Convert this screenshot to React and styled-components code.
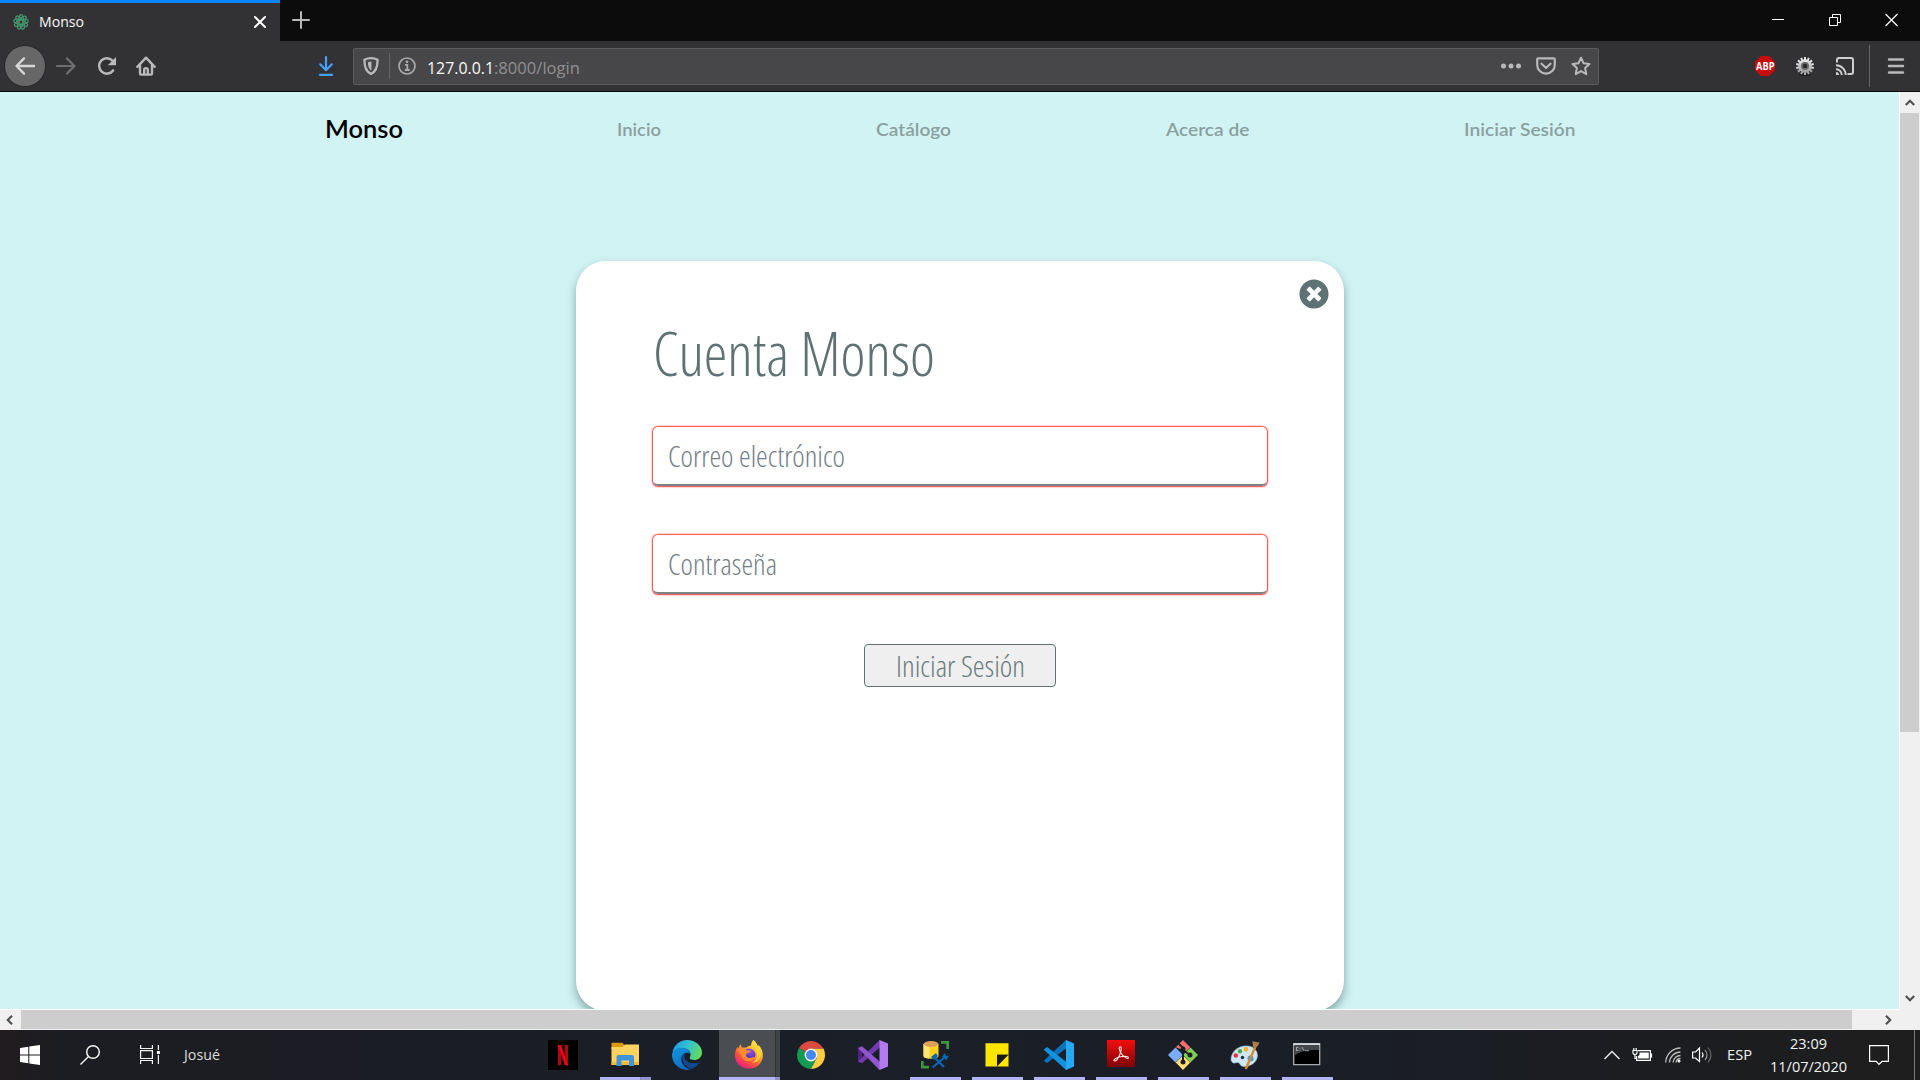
import React, { useLayoutEffect, useRef, useState } from "react";
import styled, { createGlobalStyle } from "styled-components";
import { FaTimesCircle } from "react-icons/fa";

const GlobalStyle = createGlobalStyle`
  * { box-sizing: border-box; }
  html, body { margin: 0; padding: 0; overflow: hidden; }
  body { font-family: "Open Sans", "Noto Sans", sans-serif; }
  svg { display: block; flex: none; overflow: visible; }
`;

const Screen = styled.div`
  width: 1920px;
  height: 1080px;
  display: flex;
  flex-direction: column;
  overflow: hidden;
`;

/* ---------- text that keeps a fixed advance width ---------- */

const FitBox = styled.span`
  display: block;
  flex: none;
  width: ${(p) => p.$w}px;
  white-space: nowrap;
`;
const FitInner = styled.span`
  display: inline-block;
  transform-origin: 0 50%;
`;

function Fit({ w, children }) {
  const ref = useRef(null);
  const [scale, setScale] = useState(1);
  useLayoutEffect(() => {
    setScale(w / ref.current.getBoundingClientRect().width);
  }, []);
  return (
    <FitBox $w={w}>
      <FitInner ref={ref} style={{ transform: `scaleX(${scale})` }}>{children}</FitInner>
    </FitBox>
  );
}

/* ---------- browser chrome ---------- */

const TabBar = styled.div`
  height: 41px;
  flex: none;
  display: flex;
  background: #0c0c0d;
`;
const Tab = styled.div`
  width: 280px;
  height: 41px;
  display: flex;
  align-items: center;
  padding: 0 14px 0 13px;
  background: #323234;
  border-top: 3px solid #0a84ff;
`;
const TabTitle = styled.div`
  flex: 1;
  margin-left: 10px;
  font-size: 14.5px;
  line-height: 20px;
  color: #f9f9fa;
`;
const NewTab = styled.div`
  display: flex;
  align-items: center;
  padding: 0 0 1px 12px;
`;
const WindowControls = styled.div`
  margin-left: auto;
  display: flex;
  align-items: center;
  gap: 44px;
  padding: 0 22px 1px 0;
`;
const Toolbar = styled.div`
  height: 51px;
  flex: none;
  display: flex;
  align-items: center;
  padding: 0 15px 0 5px;
  background: #323234;
  border-bottom: 1px solid #0c0c0d;
`;
const BackButton = styled.div`
  width: 40px;
  height: 40px;
  display: grid;
  place-items: center;
  border-radius: 50%;
  background: #676768;
  box-shadow: 0 0 0 1px #29292b;
`;
const Slot = styled.div`
  flex: none;
  margin-left: ${(p) => p.$ml || 0}px;
`;
const UrlBar = styled.div`
  width: 1246px;
  height: 37px;
  flex: none;
  margin-left: 19px;
  display: flex;
  align-items: center;
  padding: 0 7px 0 8px;
  background: #474749;
  border: 1px solid #5c5c5e;
  border-radius: 2px;
`;
const Rule = styled.div`
  width: 1px;
  height: ${(p) => p.$h}px;
  flex: none;
  margin-left: ${(p) => p.$ml}px;
  background: #656567;
`;
const Address = styled.div`
  display: flex;
  margin: 4px auto 0 11px;
  font-size: 16.5px;
  line-height: 22px;
  color: #909092;
`;
const Host = styled.span`
  color: #fafafa;
`;
const AbpBadge = styled.div`
  width: 20px;
  height: 20px;
  display: grid;
  place-items: center;
  background: #c70d0c;
  clip-path: polygon(30% 0, 70% 0, 100% 30%, 100% 70%, 70% 100%, 30% 100%, 0 70%, 0 30%);
  color: #fff;
  font-size: 11px;
  font-weight: 700;
  line-height: 20px;
`;

/* ---------- page ---------- */

const Viewport = styled.div`
  height: 938px;
  flex: none;
  display: grid;
  grid-template-columns: 1899px 21px;
  grid-template-rows: 917px 21px;
`;
const Page = styled.div`
  background: #d1f3f3;
  overflow: hidden;
`;
const Nav = styled.nav`
  height: 74px;
  display: flex;
  align-items: center;
  justify-content: space-between;
  padding: 0 323.5px 0 324.5px;
  font-family: Lato, "Open Sans", sans-serif;
  font-size: 17.8px;
  font-weight: 600;
  line-height: 24px;
  color: #8aa09f;
`;
const Brand = styled.div`
  font-size: 24px;
  line-height: 32px;
  color: #000;
`;
const Card = styled.main`
  width: 768px;
  height: 750px;
  margin: 95px 0 0 576px;
  padding: 17.5px 15px 0 76.5px;
  background: #fff;
  border-radius: 30px;
  box-shadow: 0 5px 10px rgba(60, 90, 90, 0.5);
  font-weight: 300;
  font-stretch: 75%;
  color: #5f7273;
`;
const CloseRow = styled.div`
  height: 33.5px;
  display: flex;
  justify-content: flex-end;
`;
const Title = styled.h1`
  margin: 0 0 33px;
  font-size: 60px;
  font-weight: 300;
  line-height: 82px;
`;
const Field = styled.div`
  width: 614px;
  height: 59px;
  margin-bottom: 49.3px;
  padding: 0 15px;
  border-bottom: 2px solid #798484;
  border-radius: 5px;
  box-shadow: 0 0 1.5px 1px rgba(255, 0, 0, 0.8);
  font-size: 30px;
  line-height: 57px;
  color: #757f88;
`;
const Submit = styled.button`
  width: 192px;
  height: 43px;
  margin: 0 0 0 211.5px;
  padding: 0;
  display: flex;
  align-items: center;
  justify-content: center;
  background: #efefef;
  border: 1px solid #5f7273;
  border-radius: 4px;
  font: inherit;
  font-size: 30px;
  line-height: 41px;
  color: #697c7d;
`;

/* ---------- scrollbars ---------- */

const VScroll = styled.div`
  display: flex;
  flex-direction: column;
  align-items: center;
  background: #f0f0f0;
  border-left: 1px solid #fff;
`;
const HScroll = styled.div`
  display: flex;
  align-items: center;
  background: #f0f0f0;
  border-top: 1px solid #fff;
`;
const ArrowCell = styled.div`
  width: 21px;
  height: 21px;
  flex: none;
  display: grid;
  place-items: center;
  padding: ${(p) => p.$pad || 0};
`;
const VThumb = styled.div`
  width: 19px;
  height: 619px;
  margin: 0 1px auto 0;
  background: #cdcdcd;
`;
const HThumb = styled.div`
  width: 1831px;
  height: 19px;
  margin: 0 auto 1px 0;
  background: #cdcdcd;
`;
const Corner = styled.div`
  background: #f0f0f0;
`;

/* ---------- taskbar ---------- */

const Taskbar = styled.footer`
  height: 50px;
  flex: none;
  display: flex;
  align-items: center;
  background: linear-gradient(90deg, #211c1f 0, #1c1d22 60px, #1b1d24 450px, #1a1f28 900px, #1a1e26 1300px, #1c1d20 1700px, #1e1e1e 1920px);
  color: #f2f2f2;
  font-size: 14.3px;
  line-height: 20px;
`;
const StartArea = styled.div`
  width: 532px;
  flex: none;
  display: flex;
  align-items: center;
  padding-left: 20px;
`;
const UserName = styled.div`
  margin-left: 24px;
  color: #dcdcdc;
`;
const Apps = styled.div`
  display: flex;
  height: 50px;
`;
const AppCell = styled.div`
  width: 62px;
  height: 50px;
  display: flex;
  flex-direction: column;
  align-items: center;
  padding-top: 10px;
  background: ${(p) =>
    p.$active
      ? "linear-gradient(90deg, transparent 1px, #4a4d52 1px, #4a4d52 57px, #303338 57px, #303338 58px, #404348 58px)"
      : "none"};
`;
const Underline = styled.div`
  width: ${(p) => (p.$active ? 62 : 51)}px;
  height: 3px;
  margin-top: 7px;
  background: ${(p) =>
    p.$active
      ? "linear-gradient(90deg, transparent 1px, #b3b4f5 1px, #b3b4f5 57px, #8e8fc5 57px)"
      : p.$group
      ? "linear-gradient(90deg, #b3b4f5 40px, #7f80a5 40px, #9495cd 41px)"
      : "#b3b4f5"};
`;
const Tray = styled.div`
  margin-left: auto;
  height: 50px;
  display: flex;
  align-items: center;
`;
const Clock = styled.div`
  display: flex;
  flex-direction: column;
  align-items: center;
  gap: 3px;
  margin: 1px 0 0 18px;
`;
const ShowDesktop = styled.div`
  width: 6px;
  height: 50px;
  margin-left: 25px;
  border-left: 1px solid #777;
`;

/* ---------- icons ---------- */

const Icon = ({ w = 20, h = w, box, color = "#b9b9ba", sw = 2, children }) => (
  <svg width={w} height={h} viewBox={box || `0 0 ${w} ${h}`} fill="none" stroke={color} strokeWidth={sw}>
    {children}
  </svg>
);

const Favicon = () => (
  <Icon w={16} color="#45936d" sw={1.3}>
    {[0, 40, 80, 120, 160, 200, 240, 280, 320].map((a) => (
      <g key={a} transform={`rotate(${a} 8 8)`}>
        <circle cx="8" cy="2.3" r="1.6" />
        <path d="M8 4.2L6.6 6M8 4.2L9.5 6" />
      </g>
    ))}
    <circle cx="8" cy="8" r="2.2" />
  </Icon>
);

const ArrowLeft = ({ color }) => (
  <Icon color={color} sw={2.4}>
    <path d="M19 10H2M9 2.4L1.5 10L9 17.6" strokeLinecap="round" strokeLinejoin="round" />
  </Icon>
);
const ArrowRight = ({ color }) => (
  <Icon color={color} sw={2.2}>
    <path d="M1 10H18M11 2.4L18.5 10L11 17.6" strokeLinecap="round" strokeLinejoin="round" />
  </Icon>
);
const Reload = () => (
  <Icon w={20} sw={2.5}>
    <path d="M16.1 14.4A7.7 7.7 0 1 1 15.4 4.6" strokeLinecap="round" />
    <path d="M19 1v8.2h-8.2z" fill="#b9b9ba" stroke="none" />
  </Icon>
);
const Home = () => (
  <Icon sw={2.4}>
    <path d="M1.3 10.8L10 1.7l8.7 9.1M4 9v8.4q0 1.2 1.2 1.2h9.6q1.2 0 1.2-1.2V9" strokeLinecap="round" strokeLinejoin="round" />
    <path d="M8.2 18v-4.6q0-1.3 1.8-1.3t1.8 1.3V18" />
  </Icon>
);
const Download = () => (
  <Icon w={16} h={20} color="#45a1ff" sw={2.2}>
    <path d="M8 1v13M2.2 8.3L8 14.2l5.8-5.9M2 18.8h12" strokeLinecap="round" strokeLinejoin="round" />
  </Icon>
);
const Shield = () => (
  <Icon w={16} h={18}>
    <path d="M8 1.2c2.5 0 4.6.6 6.6 1.6 0 6.4-.8 11.8-6.6 14C2.2 14.6 1.4 9.2 1.4 2.8 3.4 1.8 5.5 1.2 8 1.2z" strokeWidth="2.3" strokeLinejoin="round" />
    <path d="M8.4 4.6v9c-2.6-1.5-3.4-4.4-3.5-8.3 1.1-.5 2.2-.7 3.5-.7z" fill="#b9b9ba" stroke="none" />
  </Icon>
);
const Info = () => (
  <Icon w={18} color="#a9a9aa" sw={1.7}>
    <circle cx="9" cy="9" r="8" />
    <path d="M7 7.8h2.3v5M6.8 13h5" strokeWidth="1.8" />
    <circle cx="9" cy="4.8" r="1.4" fill="#a9a9aa" stroke="none" />
  </Icon>
);
const Pocket = () => (
  <Icon w={20} h={18} sw={2.2}>
    <path d="M2.2 1.3h15.6q1 0 1 1v5.5a8.8 8.8 0 0 1-17.6 0V2.3q0-1 1-1z" />
    <path d="M5.5 6.7L10 11l4.5-4.3" strokeLinecap="round" strokeLinejoin="round" />
  </Icon>
);
const Star = () => (
  <Icon sw={2}>
    <path d="M10 1.7l2.5 5.5 6 .7-4.4 4.1 1.2 6.1L10 15.1l-5.3 3 1.2-6.1L1.5 7.9l6-.7z" strokeLinejoin="round" />
  </Icon>
);
const GearIcon = () => (
  <Icon w={18} sw={0}>
    <defs>
      <linearGradient id="gear" x1="0" y1="0" x2="0" y2="1">
        <stop offset="0" stopColor="#ededed" />
        <stop offset="1" stopColor="#999" />
      </linearGradient>
    </defs>
    <ellipse cx="9" cy="17.5" rx="6" ry="1.5" fill="#1e1e1f" />
    {Array.from({ length: 14 }, (_, i) => (
      <rect key={i} x="8" y="0" width="2" height="4" fill={i > 4 && i < 10 ? "#a9a9a9" : "#dedede"} transform={`rotate(${(i * 360) / 14} 9 9)`} />
    ))}
    <circle cx="9" cy="9" r="6.8" fill="url(#gear)" />
    <circle cx="9" cy="9" r="4" fill="#6b6b6b" />
    <circle cx="9" cy="9" r="2.3" fill="#2b2b2d" />
  </Icon>
);
const Cast = () => (
  <Icon w={18} color="#cfcfd0" sw={2}>
    <path d="M1 5.5V3q0-2 2-2h12q2 0 2 2v12q0 2-2 2h-3.5" />
    <path d="M0 8.3A9.7 9.7 0 0 1 9.7 18M0 12.2A5.8 5.8 0 0 1 5.8 18" />
    <path d="M0 15a3 3 0 0 1 3 3H0z" fill="#cfcfd0" stroke="none" />
  </Icon>
);
const Chevron = ({ turn }) => (
  <Icon w={10} color="#505050" sw={2.2}>
    <path d="M0.8 7L5 2.8L9.2 7" transform={`rotate(${turn} 5 5)`} />
  </Icon>
);

const Win = () => (
  <Icon w={20} sw={0}>
    <path d="M0 2.9L8.3 1.7V9.5H0zM9.3 1.5L20 0v9.5H9.3zM0 10.4h8.3v7.9L0 17.1zM9.3 10.4H20V20L9.3 18.5z" fill="#fff" />
  </Icon>
);
const Search = () => (
  <Icon w={20} color="#f2f2f2" sw={1.5}>
    <circle cx="13" cy="7" r="6.3" />
    <path d="M8.5 11.5L.5 19.5" />
  </Icon>
);
const TaskView = () => (
  <Icon w={20} color="#f2f2f2" sw={1.2}>
    <path d="M.6 0v3.5h11.8V0M.6 19v-3.5h11.8V19M.6 5.7h11.8v7.8H.6zM18.4 0v5M18.4 10v9" />
    <path d="M16.9 6h3v3h-3z" fill="#fff" stroke="none" />
  </Icon>
);

const Netflix = () => (
  <Icon w={30} sw={0}>
    <path d="M0 0h30v30H0z" fill="#000" />
    <path d="M10 5h3.2v20l-3.2.4zM16.8 5H20v20.4l-3.2-.4z" fill="#b20710" />
    <path d="M10 5h3.2L20 25.4l-3.3-.4z" fill="#e50914" />
  </Icon>
);
const Explorer = () => (
  <Icon w={30} sw={0}>
    <path d="M1.5 3.5q0-.7.7-.7h10.3l2 2.4V9h-13z" fill="#dc9a0a" />
    <path d="M1.5 7h11l2.3-2.6h14.2V25h-27.5z" fill="#ffd35e" />
    <path d="M1.5 22h27.5v3h-27.5z" fill="#f0b93a" />
    <path d="M6.5 17q0-2 2-2h13.5q2 0 2 2v9h-5v-5.5h-7.5V26h-5z" fill="#3f95d8" />
  </Icon>
);
const Edge = () => (
  <Icon w={30} sw={0}>
    <defs>
      <linearGradient id="edgeTop" x1="0" y1=".3" x2="1" y2=".6">
        <stop offset="0" stopColor="#1e9de0" />
        <stop offset=".5" stopColor="#35c3cf" />
        <stop offset="1" stopColor="#66dc55" />
      </linearGradient>
      <linearGradient id="edgeSide" x1="0" y1="0" x2=".6" y2="1">
        <stop offset="0" stopColor="#1497e0" />
        <stop offset="1" stopColor="#0a6cc4" />
      </linearGradient>
    </defs>
    <path d="M.5 12C2 5 7.5 0 15 0c8.5 0 15 6 15 12.5 0 5-4 7.5-8 7.5-3 0-4.8-1.2-4.3-2.3C19.5 15 19 10 13 8.5 8.5 7.5 3 8.5.5 12z" fill="url(#edgeTop)" />
    <path d="M0 15C0 10.5 4.5 7.8 9.5 7.8c5 0 8.7 3 8.7 6.2-2-2-6.2-1.5-8 1.5-2.5 4.5 0 11.5 8.3 14.1C9 31.5 0 24.5 0 15z" fill="url(#edgeSide)" />
    <path d="M10.8 14.7C8.7 19 12 27.5 20 29q5-2.2 8-7c-5 2.5-13.5 1.5-15.5-4.5-.4-1 0-2.4.6-3.6-1 0-1.8.2-2.3.8z" fill="#114a8b" />
  </Icon>
);
const Firefox = () => (
  <Icon w={30} sw={0}>
    <defs>
      <linearGradient id="fox" x1=".85" y1=".05" x2=".25" y2="1">
        <stop offset="0" stopColor="#fff24a" />
        <stop offset=".35" stopColor="#ffb52c" />
        <stop offset=".65" stopColor="#ff5a36" />
        <stop offset="1" stopColor="#e9158c" />
      </linearGradient>
      <radialGradient id="globe" cx=".6" cy=".2">
        <stop offset="0" stopColor="#a052e8" />
        <stop offset="1" stopColor="#5a38c4" />
      </radialGradient>
    </defs>
    <path d="M19.5 0c2.5 2 3.8 4.5 4.5 6.5l.6-1.5c3 3 4.6 7 4.2 11.5C28.2 23.5 22.5 28.8 15 28.8 7 28.8 1 22.8 1 15.5c0-3.5 1-6.5 2.5-8.5l.8 1.5C4.8 6.5 6 5 7 4.2c0 1.8.5 2.8 1.5 3.5 1-.3 2.5-.3 3.5 0 1.5-1.5 3.5-2 5-2 0-2 1-4.5 2.5-5.7z" fill="url(#fox)" />
    <circle cx="15.2" cy="14.8" r="6.2" fill="url(#globe)" />
    <path d="M4 10c3-2 6.5-1.7 8.5.2 1.5.3 3 .5 4 .5-.5 2-3 2.3-4 3-1 1.8 0 4 2.8 4.2 2.5.2 3.5-1 5.5-.5-1.8 3.5-5 4.6-8.5 3.6C7.5 19.7 7 13 4 10z" fill="#ff8a30" />
    <path d="M18.5 4c3 3.5 5 7 4.5 12-.5 4-3 6-6 7 6.5 0 10-4.5 9.7-9.5C26.5 9 23 6 19.5 0z" fill="#ffd83a" opacity=".8" />
  </Icon>
);
const Chrome = () => (
  <Icon w={30} sw={0}>
    <path d="M15 15L2.9 8A14 14 0 0 1 27.1 8L28 8.8H15z" fill="#db4a3e" />
    <path d="M15 15L2.9 8A14 14 0 0 0 15 29L20.6 18.5z" fill="#159a56" />
    <path d="M15 8.8h12.6A14 14 0 0 1 15 29l5.8-11z" fill="#ffcd42" />
    <circle cx="15" cy="15" r="6.4" fill="#f4f4f4" />
    <circle cx="15" cy="15" r="5" fill="#4688f1" />
  </Icon>
);
const VisualStudio = () => (
  <Icon w={30} sw={0}>
    <path d="M0 8l4-1.7v17L0 21.5z" fill="#52218a" />
    <path d="M0 21.5L21.5 0l3 5L4 23.3z" fill="#7339ae" />
    <path d="M0 8l4-1.7L24.5 24l-3 6z" fill="#9155ce" />
    <path d="M21.5 0L30 3.5v23L21.5 30z" fill="#b27cf0" />
  </Icon>
);
const DbTool = () => (
  <Icon w={30} sw={0}>
    <path d="M3.5 4v12c0 3.5 15 3.5 15 0V4z" fill="#ffd21c" />
    <path d="M3.5 4v12c0 1.5 3 2.3 6 2.5V4z" fill="#ffe477" />
    <ellipse cx="11" cy="4" rx="7.5" ry="2.9" fill="#dca25a" />
    <path d="M21 1h8v8h-2.7V3.7H21zM1 21h2.7v4.8H9v2.7H1z" fill="#3d9540" />
    <path d="M13 16l11 11M25 17L12.5 27.5" stroke="#0868b8" strokeWidth="2.2" />
    <path d="M11 17l5-4 2 3-4 4zM22 17l3-4 1 3 3-.5-2.5 4.5z" fill="#0868b8" />
  </Icon>
);
const Sticky = () => (
  <Icon w={30} sw={0}>
    <path d="M3.5 3.3h23v11.5H15v11.7H3.5z" fill="#ffe600" />
    <path d="M26.5 14.8H15v11.7z" fill="#17191f" />
    <path d="M26.5 14.8v11.7H15z" fill="#ffe600" />
  </Icon>
);
const VsCode = () => (
  <Icon w={30} sw={0}>
    <path d="M0 20.5L22 0l3 6L3.8 22.4q-.8.6-1.6 0L.4 21.2q-.6-.3-.4-.7z" fill="#0872bd" />
    <path d="M0 9.5L2.2 7.6q.8-.7 1.6 0L25 24l-3 6L.3 10.3q-.5-.4-.3-.8z" fill="#1092dc" />
    <path d="M22 0l8 3.5v23L22 30z" fill="#27a8f2" />
  </Icon>
);
const Acrobat = () => (
  <Icon w={30} sw={0}>
    <defs>
      <linearGradient id="acro" x1="0" y1="0" x2="0" y2="1">
        <stop offset="0" stopColor="#f40e0e" />
        <stop offset="1" stopColor="#7c0205" />
      </linearGradient>
    </defs>
    <path d="M1 0h28v27H1z" fill="url(#acro)" />
    <path d="M14.5 12.5C12.5 8.5 13 6.7 14.3 6.7c1.5 0 1.2 3-.3 7.3-1.2 3-3.5 7-5.3 7-2 0-.5-2.5 3.8-3.8 4-1.2 9.5-1.5 10 .3.3 1.7-4 1.2-8-5z" stroke="#ffe4e0" strokeWidth="1.1" />
  </Icon>
);
const Git = () => (
  <Icon w={30} sw={0}>
    <path d="M15 0l7.2 7.2-5 5L15 10 7.8 7.2z" fill="#f66f70" />
    <path d="M22.5 7.5L30 15l-7.5 7.5L15 15z" fill="#7fce55" />
    <path d="M7.5 7.5L15 15l-7.5 7.5L0 15z" fill="#7badff" />
    <path d="M15 15.5l7.2 7L15 30l-7.2-7.5z" fill="#ffdf72" />
    <path d="M10.5 3.5L15 8v14M15 10l7 5" stroke="#1c2025" strokeWidth="2" />
    <circle cx="15" cy="9" r="2.5" fill="#1c2025" />
    <circle cx="22" cy="15" r="2.5" fill="#1c2025" />
    <circle cx="15" cy="22" r="2.5" fill="#1c2025" />
  </Icon>
);
const Paint = () => (
  <Icon w={30} sw={0}>
    <path d="M1 20C1 11 9 5.5 17 6c7 .5 11 5 10.3 10.5C26.5 23 20 26.5 13.5 26.5c-3.5 0-3-3.5-5.5-4-2.5-.3-5 2.5-7-2.5z" fill="#cfe6f5" stroke="#9cc5e2" strokeWidth=".7" />
    <circle cx="5.8" cy="15.5" r="2.3" fill="#e0393b" />
    <circle cx="10" cy="11.3" r="2.2" fill="#4bab48" />
    <circle cx="16" cy="9.2" r="2.2" fill="#f6ad20" />
    <circle cx="20.5" cy="18.5" r="3" fill="#3a96dd" />
    <circle cx="12.5" cy="17.5" r="1.7" fill="#222a33" />
    <path d="M24.5 6.5l1.5.7L17 28.5l-2 .3z" fill="#de8c28" stroke="#de8c28" strokeWidth=".8" />
    <path d="M22.5 6.5C23.5 4 22 3 22.5 1c2 1 4.5 1.5 7 1-.5 2.8-2 4.5-3.8 5.8z" fill="#ad7d4b" />
  </Icon>
);
const Cmd = () => (
  <Icon w={30} sw={0}>
    <path d="M1.7 3.7h26v21h-26z" fill="#000" stroke="#a8acb0" strokeWidth="1.3" />
    <path d="M1.5 3.3h26.5v2H1.5z" fill="#d2d8de" />
    <path d="M2.4 5.5h24.7v4.5C18 9.5 7 10.5 2.4 16z" fill="#44474b" />
    <path d="M6.5 7.3h-2v3.2h2M8 8v.8M8 9.8v.8M10 7l2 3.7M13 10.7h4" stroke="#bbb" strokeWidth=".8" />
  </Icon>
);

const APPS = [
  { Art: Netflix },
  { Art: Explorer, open: true, group: true },
  { Art: Edge },
  { Art: Firefox, open: true, active: true },
  { Art: Chrome },
  { Art: VisualStudio },
  { Art: DbTool, open: true },
  { Art: Sticky, open: true },
  { Art: VsCode, open: true },
  { Art: Acrobat, open: true },
  { Art: Git, open: true },
  { Art: Paint, open: true },
  { Art: Cmd, open: true },
];

export default function App() {
  return (
    <Screen>
      <GlobalStyle />
      <TabBar>
        <Tab>
          <Favicon />
          <TabTitle><Fit w={45}>Monso</Fit></TabTitle>
          <Icon w={12} color="#fff" sw={2}><path d="M1 1l10 10M11 1L1 11" strokeLinecap="round" /></Icon>
        </Tab>
        <NewTab>
          <Icon w={18} sw={2}><path d="M9 1v16M1 9h16" strokeLinecap="round" /></Icon>
        </NewTab>
        <WindowControls>
          <Icon w={12} color="#fff" sw={1}><path d="M-1 5.5h12" /></Icon>
          <Icon w={12} color="#fff" sw={1}><path d="M.5 3.5h8v8h-8zM3.5 3V.5h8v8H9" /></Icon>
          <Icon w={13} h={12} color="#fff" sw={1.2}><path d="M.5 0l12 12M12.5 0l-12 12" /></Icon>
        </WindowControls>
      </TabBar>

      <Toolbar>
        <BackButton><ArrowLeft color="#d6d6d7" /></BackButton>
        <Slot $ml={11}><ArrowRight color="#6f6f71" /></Slot>
        <Slot $ml={21}><Reload /></Slot>
        <Slot $ml={19}><Home /></Slot>
        <Slot $ml={162}><Download /></Slot>
        <UrlBar>
          <Slot $ml={1}><Shield /></Slot>
          <Rule $h={26} $ml={10} />
          <Slot $ml={8}><Info /></Slot>
          <Address>
            <Host><Fit w={67}>127.0.0.1</Fit></Host>
            <Fit w={86}>:8000/login</Fit>
          </Address>
          <Icon w={20} h={6} sw={0}>
            {[2.5, 10, 17.5].map((x) => <circle key={x} cx={x} cy="3" r="2.5" fill="#b9b9ba" />)}
          </Icon>
          <Slot $ml={15}><Pocket /></Slot>
          <Slot $ml={15}><Star /></Slot>
        </UrlBar>
        <Slot $ml={156}><AbpBadge><Fit w={18.5}>ABP</Fit></AbpBadge></Slot>
        <Slot $ml={21}><GearIcon /></Slot>
        <Slot $ml={22}><Cast /></Slot>
        <Rule $h={42} $ml={15} />
        <Slot $ml={18}>
          <Icon w={16} sw={2.4}><path d="M1 1.5h14M1 8h14M1 14.5h14" strokeLinecap="round" /></Icon>
        </Slot>
      </Toolbar>

      <Viewport>
        <Page>
          <Nav>
            <Brand><Fit w={78}>Monso</Fit></Brand>
            <Fit w={44}>Inicio</Fit>
            <Fit w={75}>Catálogo</Fit>
            <Fit w={83.5}>Acerca de</Fit>
            <Fit w={111.5}>Iniciar Sesión</Fit>
          </Nav>
          <Card>
            <CloseRow><FaTimesCircle size={30} color="#5f7273" /></CloseRow>
            <Title><Fit w={282}>Cuenta Monso</Fit></Title>
            <Field><Fit w={177}>Correo electrónico</Fit></Field>
            <Field><Fit w={109}>Contraseña</Fit></Field>
            <Submit><Fit w={129}>Iniciar Sesión</Fit></Submit>
          </Card>
        </Page>
        <VScroll>
          <ArrowCell $pad="0 1px 0 0"><Chevron turn={0} /></ArrowCell>
          <VThumb />
          <ArrowCell $pad="0 1px 2px 0"><Chevron turn={180} /></ArrowCell>
        </VScroll>
        <HScroll>
          <ArrowCell $pad="0 2px 1px 0"><Chevron turn={-90} /></ArrowCell>
          <HThumb />
          <ArrowCell $pad="0 2px 1px 0"><Chevron turn={90} /></ArrowCell>
        </HScroll>
        <Corner />
      </Viewport>

      <Taskbar>
        <StartArea>
          <Win />
          <Slot $ml={40}><Search /></Slot>
          <Slot $ml={40}><TaskView /></Slot>
          <UserName><Fit w={36}>Josué</Fit></UserName>
        </StartArea>
        <Apps>
          {APPS.map(({ Art, open, active, group }, i) => (
            <AppCell key={i} $active={active}>
              <Art />
              {open && <Underline $active={active} $group={group} />}
            </AppCell>
          ))}
        </Apps>
        <Tray>
          <Icon w={16} h={10} color="#eee" sw={1.4}><path d="M.5 9L8 1.5L15.5 9" /></Icon>
          <Slot $ml={12}>
            <Icon w={20} h={14} color="#fff" sw={1.2}>
              <path d="M6 2.6h12.4v9.8H4.6V8M19.5 5.5v4" />
              <path d="M7.5 4.5h9.3v6H6V8l1.5-1z" fill="#fff" stroke="none" />
              <path d="M1 2.5h4v2.3Q5 6.5 3 6.5T1 4.8zM1.8 0v2.5M4.2 0v2.5M3 6.5v4H5" />
            </Icon>
          </Slot>
          <Slot $ml={13}>
            <Icon w={16} color="#bbb" sw={1.3}>
              <path d="M.7 15.5A15 15 0 0 1 15.5 1M4.5 15.5A11 11 0 0 1 15.5 5M8 15.5A7.5 7.5 0 0 1 15.5 8.5M11 15.5a4.500 4.500 0 0 1 4.5-4" />
              <circle cx="14" cy="14" r="1.5" fill="#fff" stroke="none" />
            </Icon>
          </Slot>
          <Slot $ml={11}>
            <Icon w={21} h={18} color="#fff" sw={1.2}>
              <path d="M.6 6h3L7.5 2v13.5L3.6 12h-3z" />
              <path d="M10 6.5q2 2.5 0 5" />
              <path d="M13 4q4 5 0 10" stroke="#999" />
              <path d="M16 1.5q6 7.5 0 15" stroke="#666" />
            </Icon>
          </Slot>
          <Slot $ml={14}><Fit w={25}>ESP</Fit></Slot>
          <Clock>
            <Fit w={37}>23:09</Fit>
            <Fit w={77}>11/07/2020</Fit>
          </Clock>
          <Slot $ml={22}>
            <Icon w={20} color="#fff" sw={1.2}><path d="M.6.6h18.8v15.8h-6.2L10 19.3l-2.8-2.9H.6z" /></Icon>
          </Slot>
          <ShowDesktop />
        </Tray>
      </Taskbar>
    </Screen>
  );
}
